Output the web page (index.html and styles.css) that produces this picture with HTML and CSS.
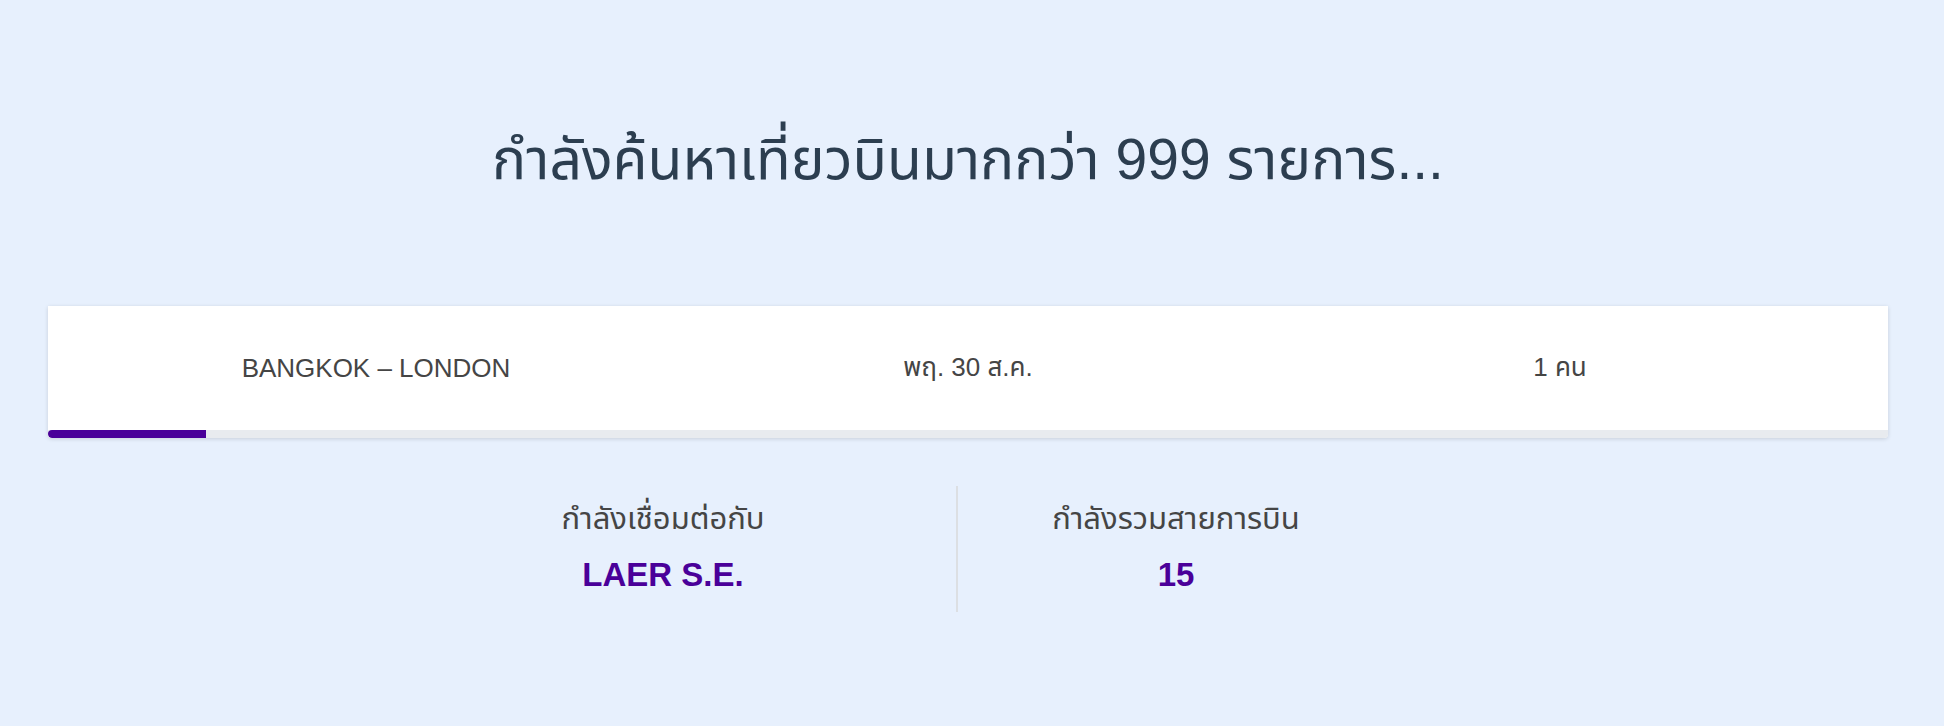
FILE: index.html
```html
<!DOCTYPE html>
<html lang="th">
<head>
<meta charset="utf-8">
<title>กำลังค้นหาเที่ยวบิน</title>
<link rel="stylesheet" href="styles.css">
</head>
<body>
<main class="page">
  <h1 class="title">กำลังค้นหาเที่ยวบินมากกว่า 999 รายการ...</h1>
  <section class="card">
    <div class="card-row">
      <div class="card-cell">BANGKOK – LONDON</div>
      <div class="card-cell">พฤ. 30 ส.ค.</div>
      <div class="card-cell">1 คน</div>
    </div>
    <div class="progress"><div class="progress-fill" style="width: 158px"></div></div>
  </section>
  <section class="stats">
    <div class="stat stat-left">
      <div class="stat-label">กำลังเชื่อมต่อกับ</div>
      <div class="stat-value">LAER S.E.</div>
    </div>
    <div class="stat stat-right">
      <div class="stat-label">กำลังรวมสายการบิน</div>
      <div class="stat-value">15</div>
    </div>
  </section>
</main>
</body>
</html>
```
FILE: styles.css
```css
html, body {
  margin: 0;
  padding: 0;
}
body {
  background: #e7f0fd;
  font-family: "Liberation Sans", "Noto Sans Thai", "Noto Sans Thai UI", "Loma", "Garuda", "Waree", sans-serif;
  width: 1944px;
  height: 726px;
  overflow: hidden;
}
.page {
  margin: 0 56px 0 48px;
  padding-top: 124px;
}
.title {
  margin: 0;
  font-weight: 400;
  font-size: 57px;
  line-height: 70px;
  color: #2c3e50;
  text-align: center;
}
.card {
  margin-top: 112px;
  background: #fff;
  box-shadow: 0 1px 4px rgba(0, 0, 0, 0.14);
  border-radius: 0 0 4px 4px;
}
.card-row {
  display: grid;
  grid-template-columns: repeat(3, 1fr);
  padding: 0 32px;
  height: 124px;
  align-items: center;
}
.card-cell {
  text-align: center;
  font-size: 26px;
  color: #454545;
}
.progress {
  height: 8px;
  background: #e8ebef;
  border-radius: 0 0 4px 4px;
  overflow: hidden;
}
.progress-fill {
  height: 100%;
  background: #4a0099;
  border-radius: 4px 0 0 4px;
}
.stats {
  display: flex;
  margin: 48px 0 0 322px;
}
.stat {
  height: 126px;
  display: flex;
  flex-direction: column;
  align-items: center;
  padding-top: 14px;
  box-sizing: border-box;
}
.stat-left {
  width: 588px;
  border-right: 2px solid #dcdfe3;
}
.stat-right {
  width: 436px;
}
.stat-label {
  font-size: 31px;
  line-height: 38px;
  color: #454545;
}
.stat-value {
  margin-top: 17px;
  font-size: 33px;
  line-height: 40px;
  font-weight: 700;
  color: #4a0099;
}
```
